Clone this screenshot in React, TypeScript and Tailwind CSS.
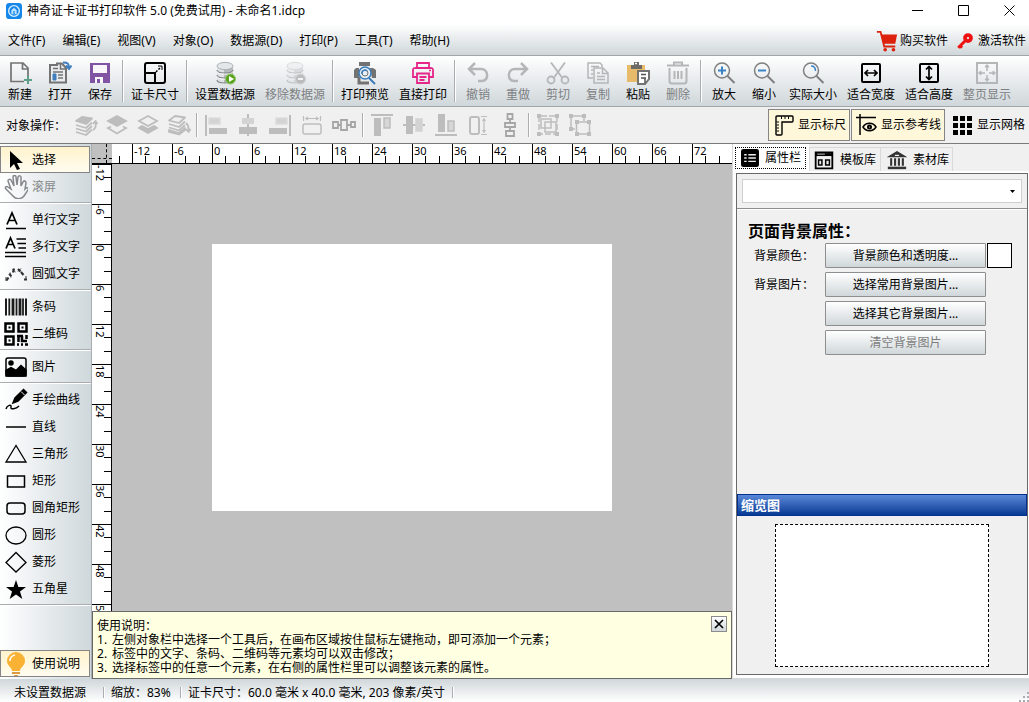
import { useLayoutEffect, useRef, useState } from 'react';
import type { ReactNode } from 'react';
import clsx from 'clsx';

interface IconProps {
  children: ReactNode;
  size?: string;
}

function Icon({ children, size = 'size-6' }: IconProps) {
  return (
    <svg
      viewBox="0 0 24 24"
      fill="none"
      stroke="currentColor"
      strokeWidth="1.5"
      className={clsx(size, 'shrink-0')}
      aria-hidden="true"
    >
      {children}
    </svg>
  );
}

const database = (
  <g stroke="none">
    <path d="M4 5v14c0 4 16 4 16 0V5z" fill="#b4b8bb" />
    <path d="M4 5v14c0 2 4 3 7 3V6z" fill="#dfe2e4" />
    <path d="M4 9c0 4 16 4 16 0M4 14c0 4 16 4 16 0M4 19c0 4 16 4 16 0" stroke="#85898c" fill="none" strokeWidth="1.200" />
    <path d="M4 10.300c0 4 16 4 16 0M4 15.300c0 4 16 4 16 0" stroke="#f4f5f5" fill="none" strokeWidth="1" />
    <ellipse cx="12" cy="5" rx="8" ry="3.600" fill="#e4e7e9" stroke="#aeb2b5" strokeWidth="1" />
  </g>
);

const magnifier = (
  <>
    <circle cx="10" cy="9.500" r="7.500" stroke="#7f7f7f" />
    <path d="M15.500 15l7 7" stroke="#7f7f7f" strokeWidth="2" />
  </>
);

const icons: Record<string, ReactNode> = {
  create: (
    <g stroke="#737373" strokeWidth="1.700">
      <path d="M16 20.500H3V2h12l5 5v8M14.500 2v6H20" />
      <path d="M20 15v8M16 19h8" stroke="#5f9e86" strokeWidth="2" />
    </g>
  ),
  open: (
    <g stroke="#737373">
      <path d="M2 4h7v-1.500h5L18 7v14.500H2z" fill="#e9ecee" strokeWidth="2" />
      <path d="M12.500 3v5H18" />
      <path d="M5 7.500h5M5 11h10M10 14h5M10 17h5" />
      <path d="M5 13h3v6H5z" fill="#3f7fbf" stroke="#3f7fbf" strokeWidth="1" />
      <path d="M15 1.500c5 0 6 1 6 6M18 4.500l3 3.500 2.500-3.500" stroke="#3f7fbf" strokeWidth="2" />
    </g>
  ),
  save: (
    <g stroke="none">
      <path d="M2 2h20v20H2z" fill="#8154a3" />
      <path d="M5 4h14v8H5zM7 16h8v6H7z" fill="#f8f6fa" />
      <path d="M9 18h3v4H9z" fill="#8154a3" />
    </g>
  ),
  cardSize: (
    <g strokeWidth="2">
      <rect x="2" y="2" width="20" height="20" rx="2" />
      <path d="M2 12h10v10" />
      <path d="M13 11l5-5" strokeDasharray="2 1.500" strokeWidth="1.500" />
      <path d="M15 5h4v4" strokeWidth="1" />
    </g>
  ),
  setSource: (
    <>
      {database}
      <circle cx="17.500" cy="18" r="5" fill="#58a51d" stroke="#98c36f" strokeWidth="1" />
      <path d="M16 15l5 3-5 3z" fill="#fff" stroke="none" />
    </>
  ),
  removeSource: (
    <g opacity=".4">
      {database}
      <circle cx="17.500" cy="18" r="5" fill="#777" stroke="#aaa" strokeWidth="1" />
      <path d="M15 18h5" stroke="#fff" strokeWidth="2" />
    </g>
  ),
  preview: (
    <g>
      <path d="M6 7V1h11v6M3 7h3v10H1V9zM17 7h3l3 2v8h-4z" fill="#727272" stroke="none" />
      <path d="M6 16v6h10" stroke="#727272" strokeWidth="3" />
      <path d="M6 6h11" stroke="#eee" strokeWidth="2" />
      <circle cx="12" cy="12" r="6" fill="#e7eef4" stroke="#3a7cba" strokeWidth="1.500" />
      <circle cx="12" cy="12" r="3" stroke="#727272" strokeWidth="1" />
      <path d="M9 13a3 3 0 0 1 5-3" stroke="#3a7cba" />
      <path d="M16 17l6 6" stroke="#3a7cba" strokeWidth="2" />
    </g>
  ),
  print: (
    <g stroke="#e62588" strokeWidth="1.800">
      <path d="M6 7V2h12v5M6 16H2V9c0-2 1-2 3-2h14c2 0 3 0 3 2v7h-4" />
      <path d="M6 12.500h12V22H6zM8.500 16h7M8.500 19h5" />
      <path d="M18 9.500h2" strokeWidth="1.500" />
    </g>
  ),
  undo: <path d="M9 2L3 8l6 6M3 8h12c8 0 8 12 1 12h-4" strokeWidth="2.500" />,
  redo: <path d="M15 2l6 6-6 6M21 8H9C1 8 1 20 8 20h4" strokeWidth="2.500" />,
  cut: (
    <g strokeWidth="1.800">
      <path d="M5 1.500l11 15M19 1.500L8 16.500" />
      <circle cx="5" cy="19" r="3.500" />
      <circle cx="19" cy="19" r="3.500" />
    </g>
  ),
  copy: (
    <g strokeWidth="1.500">
      <path d="M7 17H2V2h12l2 2v2" />
      <path d="M5 5.500h8M5 9h2M5 13h2" />
      <path d="M8 7h9l5 5v10H8zM16.500 7v5.500H22" />
      <path d="M11 12h3M11 15.500h8M11 18.500h8" />
    </g>
  ),
  paste: (
    <g>
      <path d="M1 4h18v17H1z" fill="#e8bb6b" stroke="none" />
      <path d="M5 4h3V1h5v3h3v4H5z" fill="#6d6a66" stroke="none" />
      <path d="M9 2.500h2" stroke="#fff" />
      <path d="M12 10h11v8l-4 5h-7z" fill="#fff" stroke="#737373" strokeWidth="2" />
      <path d="M15 13.500h5M15 17h5M19 17v5" stroke="#555" />
    </g>
  ),
  remove: (
    <g strokeWidth="2">
      <path d="M1 4.500h22M8 4V1.500h8V4M3.500 7v13c0 2 1 2.500 2.500 2.500h12c1.500 0 2.500-.500 2.500-2.500V7" />
      <path d="M8.500 10v8M12 10v8M15.500 10v8" />
    </g>
  ),
  zoomIn: (
    <>
      {magnifier}
      <path d="M6 9.500h8M10 5.500v8" stroke="#3a84c6" strokeWidth="2" />
    </>
  ),
  zoomOut: (
    <>
      {magnifier}
      <path d="M6 9.500h8" stroke="#3a84c6" strokeWidth="2" />
    </>
  ),
  actual: (
    <>
      {magnifier}
      <path d="M10 5c3 0 4.500 2 4.500 5" stroke="#3a84c6" />
    </>
  ),
  fitWidth: (
    <g strokeWidth="2">
      <rect x="3" y="3" width="18" height="18" rx="1" />
      <path d="M6.500 12h11M9 9l-3 3 3 3M15 9l3 3-3 3" strokeWidth="1.700" />
    </g>
  ),
  fitHeight: (
    <g strokeWidth="2">
      <rect x="3" y="3" width="18" height="18" rx="1" />
      <path d="M12 6v12M9 8.500l3-3 3 3M9 15.500l3 3 3-3" strokeWidth="1.700" />
    </g>
  ),
  fitPage: (
    <g>
      <path d="M2 2h20v20H2z" strokeWidth="2" />
      <path d="M12 10V5M12 14v5M10 12H5M14 12h5" />
      <path d="M10 6l2-2.500L14 6zM10 18l2 2.500 2-2.500zM6 10l-2.500 2L6 14zM18 10l2.500 2-2.500 2z" fill="currentColor" strokeWidth="1" />
    </g>
  ),

  // object operations
  raise: (
    <g strokeWidth="1.800" strokeLinejoin="round">
      <path d="M2 8l6-4 10 1.500L12 11z" fill="currentColor" />
      <path d="M2 12l10 3 6-5.500M2 15.500l10 3 6-5.500M2 19l10 3 6-5.500" />
      <path d="M19 17c3-2 3-4 2.500-8M19 11l2.500-3 2 3" />
    </g>
  ),
  toFront: (
    <g strokeWidth="1.800">
      <path d="M12 3l9 5-9 5-9-5z" fill="currentColor" />
      <path d="M6 13.500L3 15l9 5.500 9-5.500-3-1.500" />
    </g>
  ),
  toBack: (
    <g strokeWidth="1.800">
      <path d="M12 3l9 5-9 5-9-5z" />
      <path d="M6 13l-3 2 9 5 9-5-3-2-6 3z" fill="currentColor" />
    </g>
  ),
  lower: (
    <g strokeWidth="1.800" strokeLinejoin="round">
      <path d="M2 7.500L8 3l10 1.500-6 5.500z" />
      <path d="M2 11l10 3 6-5.500M2 14.500l10 3 6-5.500" />
      <path d="M2 17l10 3 6-5v2l-6 4.500L2 19z" fill="currentColor" />
      <path d="M19 10c2.500 2 3 4 2.500 8M19 16l2.500 3 2-3" />
    </g>
  ),
  alignLeft: (
    <g>
      <path d="M2 2v21" strokeWidth="2" />
      <path d="M5 5h11v6H5z" fill="#d3d3d3" stroke="#dcdcdc" />
      <path d="M5 15h18v6H5z" fill="currentColor" stroke="none" />
    </g>
  ),
  alignCenter: (
    <g>
      <path d="M12 1v22" strokeWidth="2" />
      <path d="M6 5h12v6H6z" fill="#d3d3d3" stroke="none" />
      <path d="M3 14h18v7H3z" fill="currentColor" stroke="none" />
    </g>
  ),
  alignRight: (
    <g>
      <path d="M22 2v21" strokeWidth="2" />
      <path d="M8 5h11v6H8z" fill="#d3d3d3" stroke="#dcdcdc" />
      <path d="M1 15h18v6H1z" fill="currentColor" stroke="none" />
    </g>
  ),
  sameWidth: (
    <g>
      <path d="M3.500 3v5M20.500 3v5M5 5.500h14M8 4l-2 1.500L8 7M16 4l2 1.500L16 7" strokeWidth="1.200" />
      <rect x="3" y="11" width="18" height="10" rx="2" />
    </g>
  ),
  spreadWidth: (
    <g strokeWidth="1.800" stroke="#a6a6a6">
      <path d="M1 9h5v6H1zM9 7h6v10H9zM19 9h4v5h-4zM6 12h3M15 12h4" />
    </g>
  ),
  alignTop: (
    <g>
      <path d="M1 2h22" strokeWidth="2" />
      <path d="M4 5h7v18H4z" fill="currentColor" stroke="none" />
      <path d="M14 5h6v10h-6z" fill="#d6d6d6" />
    </g>
  ),
  alignMiddle: (
    <g>
      <path d="M1 12h22" strokeWidth="2" />
      <path d="M4 3h7v18H4z" fill="currentColor" stroke="none" />
      <path d="M14 6h6v12h-6z" fill="#d3d3d3" stroke="#d3d3d3" />
    </g>
  ),
  alignBottom: (
    <g>
      <path d="M1 22h22" strokeWidth="2" />
      <path d="M4 1h7v18H4z" fill="currentColor" stroke="none" />
      <path d="M14 8h6v10h-6z" fill="#d6d6d6" />
    </g>
  ),
  sameHeight: (
    <g>
      <rect x="4" y="4" width="9" height="17" rx="2" strokeWidth="2" />
      <path d="M15 3.500h6M15 21.500h6M18 5v15M16.500 8L18 6l1.500 2M16.500 17l1.500 2 1.500-2" strokeWidth="1.200" />
    </g>
  ),
  spreadHeight: (
    <g strokeWidth="1.800" stroke="#a6a6a6">
      <path d="M9.500 1h5v5h-5zM7 10h10v4H7zM8 18h8v5H8zM12 6v4M12 14v4" />
    </g>
  ),
  group: (
    <g strokeWidth="1.500">
      <path d="M5 6h10v9H5zM9 9h11v10H9z" />
      <path d="M3 3v18h18V3z" strokeDasharray="6 2" />
      <path d="M1 1h4v4H1zM19 1h4v4h-4zM1 19h4v4H1zM19 19h4v4h-4z" fill="currentColor" stroke="none" />
    </g>
  ),
  ungroup: (
    <g strokeWidth="1.500">
      <path d="M7 16H3V3h13v5M8.500 9h13v12h-13z" />
      <path
        d="M1 1h4v4H1zM14 1h4v4h-4zM1 14h4v4H1zM7 7h4v4H7zM19 7h4v4h-4zM7 19h4v4H7zM19 19h4v4h-4z"
        fill="currentColor"
        stroke="none"
      />
    </g>
  ),
  rulers: (
    <g strokeWidth="1.400">
      <path d="M5 3h15q1 0 1 1v4q0 1-1 1H10v12q0 1-1 1H5q-1 0-1-1V4q0-1 1-1z" />
      <path d="M9.500 3.500v2.500M13 3.500v2.500M16.500 3.500v2.500M4.500 9H7M4.500 12H7M4.500 15H7M4.500 18H7" strokeWidth="1" />
    </g>
  ),
  guides: (
    <g>
      <path d="M5 1v21M1 4.500h20" strokeWidth="1.500" />
      <path d="M8 14c3-5 10-5 13 0-3 5-10 5-13 0z" strokeWidth="1.500" />
      <circle cx="14.500" cy="14" r="1.500" strokeWidth="2" />
    </g>
  ),
  grid: (
    <path
      d="M3 3h5v5H3zM10 3h5v5h-5zM17 3h5v5h-5zM3 10h5v5H3zM10 10h5v5h-5zM17 10h5v5h-5zM3 17h5v5H3zM10 17h5v5h-5zM17 17h5v5h-5z"
      fill="currentColor"
      stroke="none"
    />
  ),

  // drawing tools
  pointer: <path d="M6 3v17l4-4 3 6 3-1-3-6h6z" fill="currentColor" stroke="none" />,
  hand: (
    <path
      d="M8 20L2 14c-2-2 1-3 2-2l3 2-3-8c0-2 2-2 3-1l3 6-1-9c0-2 3-2 3 0l1 8 1-8c1-2 3-1 3 0v9l2-4c1-2 3-1 3 1l-1 6 1-1c2-1 3 1 2 2l-4 6c-2 3-8 4-11 0z"
      strokeWidth="1.500"
    />
  ),
  singleLine: (
    <g>
      <path d="M3 16.500L8 5l5 11.500M5 12.500h6.500" strokeWidth="1.700" />
      <path d="M2 20.500h20" />
    </g>
  ),
  multiLine: (
    <g>
      <path d="M2 13.500L6.500 3l4.500 10.500M3.500 9.500h6" strokeWidth="1.700" />
      <path d="M12.500 4H22M13.500 8.500H22M14.500 13H22M1 17.500h21M1 21.500h21" strokeWidth="1.300" />
    </g>
  ),
  arcText: (
    <g stroke="#333" strokeWidth="2.200">
      <path d="M2.500 18.500l2-3M5 12l2.500 2M9 10.500l1-4M14 7l2.500 2.500M17 10l2.500 3M20 17.500h3" />
      <path d="M2 15v4M6 10.500l1 5M8.500 7.500l3 2.500M14 9.500l3-3M22 14v4" strokeWidth="1" />
    </g>
  ),
  barcode: (
    <g stroke="#1c1c1c">
      <path d="M2 3.500v17M22 3.500v17" strokeWidth="2" />
      <path d="M5.300 3.500v17M12.500 3.500v17M19 3.500v17" strokeWidth="1.800" />
      <path d="M9 3.500v17M16 3.500v17" strokeWidth="2.800" />
    </g>
  ),
  qrcode: (
    <g strokeWidth="2.500">
      <path d="M1.500 1.500h8v8h-8zM14.500 1.500h8v8h-8zM1.500 14.500h8v8h-8z" />
      <path d="M4.500 4.500h2v2h-2zM17.500 4.500h2v2h-2zM4.500 17.500h2v2h-2z" fill="currentColor" stroke="none" />
      <path d="M13 14h6M14.500 13v7M18 14v5h5M22.500 13v4M13 22.500h2M17 22.500h2M21 22.500h3" />
    </g>
  ),
  image: (
    <g>
      <rect x="2" y="3" width="20" height="18" rx="2" />
      <circle cx="7" cy="8" r="2" fill="currentColor" />
      <path d="M2 15.500l5-3 5 3 5-5 5 4.500v6H2z" fill="currentColor" />
    </g>
  ),
  freehand: (
    <g>
      <path d="M19.500 1.500l3 3L14 13l-5 2 2-5z" fill="currentColor" />
      <path d="M17 3.500l3.500 3.500" stroke="#eee" strokeWidth="1" />
      <path d="M2 21c1-4 6-5 5-2s5 2 8-1" />
    </g>
  ),
  line: <path d="M2 12h20" />,
  triangle: <path d="M12 3.500L2 20h20z" strokeWidth="1.300" />,
  rect: <path d="M3.500 7h17v11h-17z" />,
  roundRect: <rect x="3" y="7" width="18" height="11" rx="3" />,
  ellipse: <ellipse cx="12" cy="12.500" rx="10" ry="8.500" strokeWidth="1.300" />,
  diamond: <path d="M12 2.500l10 10-10 9.500-10-9.500z" strokeWidth="1.300" />,
  star: (
    <path d="M12 3l2.400 7H22l-6 4.500 2.300 7.500-6.300-4.500L5.700 22 8 14.500 2 10h7.600z" fill="currentColor" stroke="none" />
  ),
  bulb: (
    <g stroke="none">
      <path d="M12 0a9 9 0 0 0-9 9c0 5 5 6 5 10h8c0-4 5-5 5-10a9 9 0 0 0-9-9z" fill="#f9b233" />
      <path d="M6 9a6 6 0 0 1 5-6" stroke="#fff" strokeWidth="1.500" />
      <path d="M8 20h8v2H8zM10 23h4v1h-4z" fill="#d99a45" />
    </g>
  ),

  // right side tabs
  props: (
    <g>
      <rect x="2" y="2" width="20" height="20" rx="2" fill="currentColor" />
      <path d="M10 8h9M10 12h9M10 16h9M5 8h3M5 12h3M5 16h3" stroke="#eee" strokeWidth="1.700" />
    </g>
  ),
  templates: (
    <g strokeWidth="2.200">
      <path d="M2 3h20v19H2z" />
      <path d="M2 5.500h20" strokeWidth="3.500" />
      <path d="M5.500 12h4v6h-4zM14 12h4.500v6H14z" strokeWidth="1.800" />
      <path d="M4 5h9" stroke="#ddd" strokeWidth="1" />
    </g>
  ),
  library: (
    <g stroke="#333">
      <path d="M2 8l10-6 10 6z" fill="#333" />
      <path d="M5 10v9M9.700 10v9M14.300 10v9M19 10v9" strokeWidth="2.500" />
      <path d="M1 21.500h22" strokeWidth="3" />
      <path d="M9.500 6.500h5" stroke="#eee" />
    </g>
  ),
  cart: (
    <g>
      <path d="M5 5h18l-2 10H8z" fill="#dc210d" stroke="none" />
      <path d="M1 2h4l4 16h12" stroke="#dc210d" strokeWidth="2" />
      <circle cx="10" cy="21.500" r="2" fill="#dc210d" stroke="none" />
      <circle cx="19" cy="21.500" r="2" fill="#dc210d" stroke="none" />
    </g>
  ),
  key: (
    <g stroke="#ee1111">
      <circle cx="16" cy="8" r="4" strokeWidth="5" />
      <path d="M12 12l-9 9M5 18l3 3" strokeWidth="4" />
    </g>
  ),
  logo: (
    <g>
      <rect x="0" y="0" width="24" height="24" rx="5" fill="#1687ea" stroke="none" />
      <circle cx="12" cy="12" r="8" stroke="#d9efff" strokeWidth="2" />
      <path d="M8 11l4-4 4 4v6H8z" fill="#bfe2ff" stroke="none" />
      <path d="M12 12v5" stroke="#1687ea" strokeWidth="2" />
    </g>
  ),
};

const menus = ['文件(F)', '编辑(E)', '视图(V)', '对象(O)', '数据源(D)', '打印(P)', '工具(T)', '帮助(H)'];

interface Tool {
  icon: string;
  label: string;
  disabled?: boolean;
}

const toolGroups: Tool[][] = [
  [
    { icon: 'create', label: '新建' },
    { icon: 'open', label: '打开' },
    { icon: 'save', label: '保存' },
  ],
  [{ icon: 'cardSize', label: '证卡尺寸' }],
  [
    { icon: 'setSource', label: '设置数据源' },
    { icon: 'removeSource', label: '移除数据源', disabled: true },
  ],
  [
    { icon: 'preview', label: '打印预览' },
    { icon: 'print', label: '直接打印' },
  ],
  [
    { icon: 'undo', label: '撤销', disabled: true },
    { icon: 'redo', label: '重做', disabled: true },
    { icon: 'cut', label: '剪切', disabled: true },
    { icon: 'copy', label: '复制', disabled: true },
    { icon: 'paste', label: '粘贴' },
    { icon: 'remove', label: '删除', disabled: true },
  ],
  [
    { icon: 'zoomIn', label: '放大' },
    { icon: 'zoomOut', label: '缩小' },
    { icon: 'actual', label: '实际大小' },
    { icon: 'fitWidth', label: '适合宽度' },
    { icon: 'fitHeight', label: '适合高度' },
    { icon: 'fitPage', label: '整页显示', disabled: true },
  ],
];

const buttonWidths: Record<number, string> = { 2: 'w-10', 4: 'w-[58px]', 5: 'w-[70px]' };

const objectGroups = [
  [
    ['raise', '上移一层'],
    ['toFront', '置于顶层'],
    ['toBack', '置于底层'],
    ['lower', '下移一层'],
  ],
  [
    ['alignLeft', '左对齐'],
    ['alignCenter', '水平居中'],
    ['alignRight', '右对齐'],
    ['sameWidth', '等宽'],
    ['spreadWidth', '水平分布'],
  ],
  [
    ['alignTop', '顶对齐'],
    ['alignMiddle', '垂直居中'],
    ['alignBottom', '底对齐'],
    ['sameHeight', '等高'],
    ['spreadHeight', '垂直分布'],
  ],
  [
    ['group', '组合'],
    ['ungroup', '取消组合'],
  ],
];

const sideGroups: Tool[][] = [
  [
    { icon: 'pointer', label: '选择' },
    { icon: 'hand', label: '滚屏', disabled: true },
  ],
  [
    { icon: 'singleLine', label: '单行文字' },
    { icon: 'multiLine', label: '多行文字' },
    { icon: 'arcText', label: '圆弧文字' },
  ],
  [
    { icon: 'barcode', label: '条码' },
    { icon: 'qrcode', label: '二维码' },
  ],
  [{ icon: 'image', label: '图片' }],
  [
    { icon: 'freehand', label: '手绘曲线' },
    { icon: 'line', label: '直线' },
    { icon: 'triangle', label: '三角形' },
    { icon: 'rect', label: '矩形' },
    { icon: 'roundRect', label: '圆角矩形' },
    { icon: 'ellipse', label: '圆形' },
    { icon: 'diamond', label: '菱形' },
    { icon: 'star', label: '五角星' },
  ],
];

const tips = [
  '左侧对象栏中选择一个工具后，在画布区域按住鼠标左键拖动，即可添加一个元素；',
  '标签中的文字、条码、二维码等元素均可以双击修改；',
  '选择标签中的任意一个元素，在右侧的属性栏里可以调整该元素的属性。',
];

// one ruler mark for every 40px of canvas
function useRulerMarks() {
  const ref = useRef<HTMLDivElement>(null);
  const [size, setSize] = useState({ width: 0, height: 0 });

  useLayoutEffect(() => {
    const el = ref.current;
    if (!el) return;
    const measure = () => setSize({ width: el.clientWidth, height: el.clientHeight });
    measure();
    const observer = new ResizeObserver(measure);
    observer.observe(el);
    return () => observer.disconnect();
  }, []);

  const marks = (count: number) => Array.from({ length: Math.max(0, count) }, (_, i) => i * 6 - 12);
  return {
    ref,
    columns: marks(Math.ceil((size.width - 20) / 40)),
    rows: marks(Math.ceil(size.height / 40)),
  };
}

function Divider() {
  return (
    <div className="flex w-[6px] shrink-0 self-stretch py-1 pl-[2px]">
      <div className="w-[2px] border-l border-[#a9adb0] bg-white" />
    </div>
  );
}

function TitleBar() {
  return (
    <header className="flex h-6 items-start bg-white pl-[6px]">
      <div className="flex h-[22px] items-center gap-[5px]">
        <Icon size="size-4">{icons.logo}</Icon>
        <h1>神奇证卡证书打印软件 5.0 (免费试用) - 未命名1.idcp</h1>
      </div>
      <div className="-mr-[3px] ml-auto flex h-5 items-center">
        <button aria-label="最小化" className="grid w-[46px] place-items-center">
          <svg className="size-[11px]" stroke="black" fill="none">
            <path d="M0 5.500h11" />
          </svg>
        </button>
        <button aria-label="最大化" className="grid w-[46px] place-items-center">
          <svg className="size-[11px]" stroke="black" fill="none">
            <path d="M.500.500h10v10H.500z" />
          </svg>
        </button>
        <button aria-label="关闭" className="grid w-[46px] place-items-center">
          <svg className="size-[11px]" stroke="black" fill="none">
            <path d="M.500.500l10 10M10.500.500l-10 10" />
          </svg>
        </button>
      </div>
    </header>
  );
}

function MenuBar() {
  return (
    <nav className="flex h-8 items-center gap-px border-b border-[#a2a6a9] bg-linear-to-b from-white to-[#d0d7da] pt-[2px]">
      {menus.map((menu) => (
        <button key={menu} className="px-2">
          {menu}
        </button>
      ))}
      <div className="ml-auto flex items-center gap-2 pr-[3px]">
        <a href="#buy" className="flex items-center gap-[2px]">
          <Icon size="size-[22px]">{icons.cart}</Icon>
          购买软件
        </a>
        <a href="#activate" className="flex items-center gap-1">
          <Icon size="size-[18px]">{icons.key}</Icon>
          激活软件
        </a>
      </div>
    </nav>
  );
}

function Toolbar() {
  return (
    <div className="flex h-[51px] items-stretch border-b border-[#a2a6a9] bg-linear-to-b from-white to-[#d0d7da]">
      {toolGroups.map((group, i) => (
        <div key={i} className="flex">
          {i > 0 && <Divider />}
          {group.map((tool) => (
            <button
              key={tool.label}
              disabled={tool.disabled}
              className={clsx(
                'flex flex-col items-center pt-[5px]',
                buttonWidths[tool.label.length],
                tool.disabled && 'text-[#b4b6b8]',
              )}
            >
              <Icon>{icons[tool.icon]}</Icon>
              <span className={clsx('leading-5', tool.disabled && 'text-[#7d8083]')}>{tool.label}</span>
            </button>
          ))}
        </div>
      ))}
    </div>
  );
}

function ObjectBar() {
  return (
    <div className="flex h-[37px] items-center border-b border-[#7b7b7b] bg-[#f0f0f0]">
      <span className="w-[70px] pt-[2px] pl-[6px]">对象操作：</span>
      {objectGroups.map((group, i) => (
        <div key={i} className="flex h-8 items-center">
          {i > 0 && <Divider />}
          {group.map(([icon, label]) => (
            <button
              key={icon}
              aria-label={label}
              disabled
              className={clsx('grid place-items-center text-[#bdbdbd]', i === 0 ? 'w-[31px] text-[#a9a9a9]' : 'w-8')}
            >
              <Icon>{icons[icon]}</Icon>
            </button>
          ))}
        </div>
      ))}
      <div className="ml-auto flex h-8 gap-px pr-1">
        <button aria-pressed="true" className="flex items-center gap-[2px] border border-[#858585] bg-[#fff7d9] px-[3px]">
          <Icon>{icons.rulers}</Icon>
          显示标尺
        </button>
        <button aria-pressed="true" className="flex items-center gap-[2px] border border-[#858585] bg-[#fff7d9] px-[3px]">
          <Icon>{icons.guides}</Icon>
          显示参考线
        </button>
        <button className="flex items-center gap-[3px] pl-1">
          <Icon>{icons.grid}</Icon>
          显示网格
        </button>
      </div>
    </div>
  );
}

function SideButton({ icon, label, disabled, active }: Tool & { active?: boolean }) {
  return (
    <button
      disabled={disabled}
      className={clsx(
        'flex h-[27px] w-[90px] items-center gap-1 border pl-[3px] text-left',
        active ? 'border-[#858585] bg-linear-to-b from-[#fff3cc] to-[#fffcf0]' : 'border-transparent',
        disabled && 'text-[#85888b]',
      )}
    >
      <Icon>{icons[icon]}</Icon>
      {label}
    </button>
  );
}

function Sidebar() {
  return (
    <aside className="flex w-[92px] shrink-0 flex-col border-r border-[#a9adb0] bg-linear-to-r from-white to-[#cfd8dc] pt-[2px]">
      {sideGroups.map((group, i) => (
        <div key={i} className="mb-[6px]">
          {i > 0 && <div className="-mt-1 mb-[2px] h-[2px] border-t border-[#a9adb0] bg-white" />}
          {group.map((tool) => (
            <SideButton key={tool.label} {...tool} active={tool.icon === 'pointer'} />
          ))}
        </div>
      ))}
      <div className="-mt-1 h-[2px] border-t border-[#a9adb0] bg-white" />
      <div className="mt-auto pb-[2px]">
        <SideButton icon="bulb" label="使用说明" active />
      </div>
    </aside>
  );
}

function TopRuler({ marks }: { marks: number[] }) {
  return (
    <div className="flex h-5 min-w-0 flex-1 overflow-hidden border-b border-black bg-white text-[11px] leading-[14px]">
      <div className="relative w-5 shrink-0">
        <i className="absolute bottom-0 left-[7px] h-[7px] w-px bg-black" />
      </div>
      {marks.map((mark) => (
        <div key={mark} className="relative w-10 shrink-0 border-l border-black pl-px">
          {mark}
          <i className="absolute bottom-0 left-3 h-[7px] w-px bg-black" />
          <i className="absolute bottom-0 left-[26px] h-[7px] w-px bg-black" />
        </div>
      ))}
    </div>
  );
}

function SideRuler({ marks }: { marks: number[] }) {
  return (
    <div className="w-5 shrink-0 overflow-hidden border-r border-black bg-white text-[11px] leading-[14px]">
      {marks.map((mark) => (
        <div key={mark} className="relative h-10 border-t border-black">
          <span className="absolute top-0 left-px [writing-mode:vertical-rl]">{mark}</span>
          <i className="absolute top-3 right-0 h-px w-[7px] bg-black" />
          <i className="absolute top-[26px] right-0 h-px w-[7px] bg-black" />
        </div>
      ))}
    </div>
  );
}

function Workspace() {
  const { ref, columns, rows } = useRulerMarks();

  return (
    <main className="flex min-w-0 flex-1 flex-col">
      <div className="flex">
        <div className="relative h-5 w-5 shrink-0 border-b border-black bg-[#c0c0c0]">
          <i className="absolute inset-y-0 left-[14px] border-l border-dashed border-black" />
          <i className="absolute inset-x-0 top-[14px] border-t border-dashed border-black" />
        </div>
        <TopRuler marks={columns} />
      </div>
      <div className="flex min-h-0 flex-1">
        <SideRuler marks={rows} />
        <div ref={ref} className="flex-1 overflow-hidden bg-[#c0c0c0] pt-20 pl-[100px]">
          <div className="h-[267px] w-[400px] bg-white" />
        </div>
      </div>
      <section className="flex items-start border border-[#696969] bg-[#ffffe1] pt-[7px] pb-[3px] pl-1 leading-[14px]">
        <div className="flex-1">
          <h2>使用说明：</h2>
          <ol>
            {tips.map((tip, i) => (
              <li key={tip} className="flex">
                <span className="w-[15px]">{i + 1}.</span>
                {tip}
              </li>
            ))}
          </ol>
        </div>
        <button
          aria-label="关闭说明"
          className="-mt-[3px] mr-1 grid size-4 place-items-center border border-[#8c8c8c] bg-linear-to-b from-white to-[#d0d7da]"
        >
          <svg viewBox="0 0 10 10" className="size-[10px]" stroke="black" strokeWidth="1.700">
            <path d="M1 1l8 8M9 1L1 9" />
          </svg>
        </button>
      </section>
    </main>
  );
}

const panelButton =
  'h-[25px] w-[161px] rounded-[1px] border border-[#8e8e8e] bg-linear-to-b from-white to-[#d0d7da] disabled:text-[#7d7d7d]';

function PropertyPanel() {
  return (
    <aside className="flex w-[297px] shrink-0 flex-col border-b border-l border-[#d8d8d8] bg-white">
      <div className="flex h-[27px] items-end bg-[#f0f0f0]" role="tablist">
        <button role="tab" aria-selected="true" className="flex h-[27px] items-center bg-white pr-[3px] pl-[2px]">
          <span className="flex h-[22px] items-center gap-[5px] border border-dotted border-black px-1">
            <Icon size="size-5">{icons.props}</Icon>
            属性栏
          </span>
        </button>
        <button
          role="tab"
          aria-selected="false"
          className="flex h-6 items-center gap-[6px] border border-b-0 border-[#d9d9d9] px-1"
        >
          <Icon size="size-5">{icons.templates}</Icon>
          模板库
        </button>
        <button
          role="tab"
          aria-selected="false"
          className="flex h-6 items-center gap-[6px] border border-b-0 border-l-0 border-[#d9d9d9] pr-[3px] pl-[6px]"
        >
          <Icon size="size-5">{icons.library}</Icon>
          素材库
        </button>
      </div>
      <div className="mt-[2px] mr-px mb-[3px] ml-[3px] flex flex-1 flex-col border border-[#696969] bg-[#f0f0f0]">
        <div className="border-b border-[#8e8e8e] p-[5px]">
          <div className="relative">
            <select aria-label="对象" className="h-6 w-full appearance-none border border-[#cfcfcf] bg-white" />
            <svg viewBox="0 0 5 3" className="pointer-events-none absolute top-[11px] right-[7px] h-[3px] w-[5px]">
              <path d="M0 0h5L2.500 3z" />
            </svg>
          </div>
        </div>
        <div className="border-t border-white pt-[9px] pl-[11px]">
          <h2 className="text-base leading-6 font-bold">页面背景属性：</h2>
          <div className="grid grid-cols-[71px_1fr] items-center gap-y-1 pl-[6px]">
            <span>背景颜色：</span>
            <div className="flex gap-px">
              <button className={panelButton}>背景颜色和透明度...</button>
              <button aria-label="当前背景颜色" className="size-[25px] border border-black bg-white" />
            </div>
            <span>背景图片：</span>
            <button className={panelButton}>选择常用背景图片...</button>
            <button className={clsx(panelButton, 'col-start-2')}>选择其它背景图片...</button>
            <button className={clsx(panelButton, 'col-start-2')} disabled>
              清空背景图片
            </button>
          </div>
        </div>
        <section className="mt-auto">
          <h2 className="h-[22px] border border-[#00308f] bg-linear-to-b from-[#5a88d8] to-[#063a94] pl-[3px] text-[13px] leading-5 font-bold text-white">
            缩览图
          </h2>
          <div className="flex justify-center px-[38px] pt-2 pb-[7px]">
            <div className="h-[143px] w-[214px] border border-dashed border-black bg-white" />
          </div>
        </section>
      </div>
    </aside>
  );
}

function StatusBar() {
  return (
    <footer className="flex h-[23px] items-center bg-linear-to-b from-[#d0d7da] to-white pt-1">
      <span className="w-[101px] pl-[14px]">未设置数据源</span>
      <Divider />
      <span className="w-[71px] pl-1">缩放：83%</span>
      <Divider />
      <span className="pr-[5px] pl-1">证卡尺寸：60.0 毫米 x 40.0 毫米, 203 像素/英寸</span>
      <Divider />
      <svg className="mt-auto ml-auto size-[10px]" fill="#a9adb0">
        <path d="M8 0h2v2H8zM4 4h2v2H4zM8 4h2v2H8zM0 8h2v2H0zM4 8h2v2H4zM8 8h2v2H8z" />
      </svg>
    </footer>
  );
}

export default function App() {
  return (
    <div className="flex h-screen min-h-[620px] flex-col overflow-hidden bg-[#f0f0f0] font-['Noto_Sans','Noto_Sans_CJK_SC',sans-serif] text-[12px] leading-[18px] whitespace-nowrap text-black">
      <TitleBar />
      <MenuBar />
      <Toolbar />
      <ObjectBar />
      <div className="flex min-h-0 flex-1">
        <Sidebar />
        <Workspace />
        <PropertyPanel />
      </div>
      <StatusBar />
    </div>
  );
}
